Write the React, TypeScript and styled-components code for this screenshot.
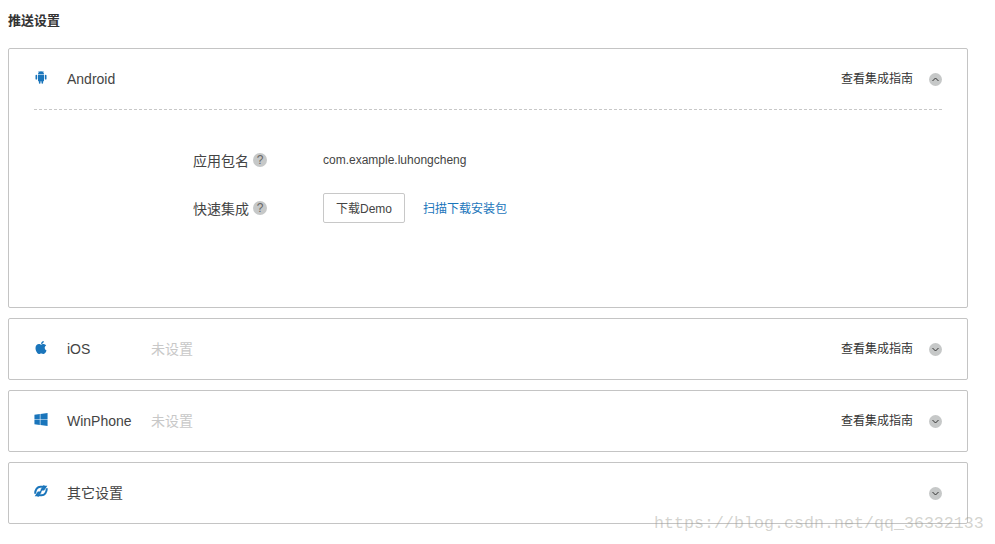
import React from "react";
import styled, { createGlobalStyle } from "styled-components";
import { FaApple, FaWindows } from "react-icons/fa";

const GlobalStyle = createGlobalStyle`
    html, body {
        margin: 0;
        padding: 0;
        background: #fff;
    }
    body {
        font-family: "Liberation Sans", "Noto Sans CJK SC", sans-serif;
        color: #333;
    }
`;

const Page = styled.div`
    position: relative;
    width: 995px;
    height: 544px;
    overflow: hidden;
    padding: 12px 27px 0 8px;
    box-sizing: border-box;
`;

const Title = styled.h2`
    margin: 0 0 18px;
    font-size: 13px;
    line-height: 18px;
    font-weight: 700;
    color: #333;
`;

const Card = styled.section<{ $open?: boolean }>`
    border: 1px solid #c4c4c4;
    border-radius: 2px;
    margin-bottom: 10px;
    box-sizing: border-box;
    height: ${(p) => (p.$open ? "260px" : "62px")};
`;

const Header = styled.div`
    display: flex;
    align-items: center;
    height: 60px;
    padding: 0 25px;
`;

const PlatformIcon = styled.span`
    display: flex;
    justify-content: center;
    width: 14px;
    margin-right: 19px;
    margin-bottom: 4px;
    font-size: 15px;
    color: #1a75bb;
`;

const Name = styled.span<{ $cjk?: boolean }>`
    width: 84px;
    font-size: 14px;
    color: #444;
    margin-bottom: ${(p) => (p.$cjk ? "2px" : "0")};
`;

const Status = styled.span`
    font-size: 14px;
    margin-bottom: 2px;
    color: #c8c8c8;
`;

const Guide = styled.span`
    margin-left: auto;
    margin-bottom: 3px;
    font-size: 12px;
    color: #333;
`;

const Toggle = styled.span`
    display: flex;
    align-items: center;
    justify-content: center;
    width: 13px;
    height: 13px;
    margin-left: 16px;
    margin-top: 1px;
    border-radius: 50%;
    background: #c6c8c8;
`;

const ToggleOnly = styled(Toggle)`
    margin-left: auto;
`;

const Divider = styled.div`
    height: 0;
    margin: 0 25px;
    border-top: 1px dashed #c8c8c8;
`;

const Body = styled.div`
    display: flex;
    flex-direction: column;
    padding: 26px 0 0 184px;
`;

const Row = styled.div`
    display: flex;
    align-items: center;
    height: 48px;
`;

const Label = styled.span`
    display: flex;
    align-items: center;
    width: 130px;
    font-size: 14px;
    color: #444;
`;

const Help = styled.span`
    display: inline-flex;
    align-items: center;
    justify-content: center;
    width: 14px;
    height: 14px;
    margin-left: 4px;
    border-radius: 50%;
    background: #c6c8c8;
    color: #666;
    font-size: 12px;
`;

const Value = styled.span`
    font-size: 12px;
    color: #444;
`;

const DemoButton = styled.button`
    width: 82px;
    height: 30px;
    padding: 0 0 2px;
    border: 1px solid #c8c8c8;
    border-radius: 2px;
    background: #fff;
    color: #444;
    font: inherit;
    font-size: 12px;
`;

const ScanLink = styled.a`
    margin-left: 18px;
    margin-bottom: 1px;
    font-size: 12px;
    color: #1a75bb;
    text-decoration: none;
`;

const Watermark = styled.div`
    position: absolute;
    left: 654px;
    top: 513px;
    font-family: "Liberation Mono", monospace;
    font-size: 16.67px;
    line-height: 22px;
    color: rgba(150, 150, 140, 0.42);
    white-space: nowrap;
`;

const Chevron: React.FC<{ up?: boolean }> = ({ up }) => (
    <svg width="7" height="5" viewBox="0 0 7 5" fill="none" stroke="#333" strokeWidth="1">
        <path d={up ? "M0.5 4L3.5 1L6.5 4" : "M0.5 1L3.5 4L6.5 1"} />
    </svg>
);

const AndroidIcon: React.FC = () => (
    <svg width="12" height="14" viewBox="0 0 12 14" fill="currentColor">
        <path d="M3 4.2C3 2.4 4.3 1.2 6 1.2S9 2.4 9 4.2Z" />
        <path d="M3.6 1L4.4 2.2M8.4 1L7.6 2.2" stroke="currentColor" strokeWidth="0.6" />
        <path d="M3 4.8H9V10.4C9 10.9 8.7 11.2 8.2 11.2H3.8C3.3 11.2 3 10.9 3 10.4Z" />
        <rect x="0.5" y="4.8" width="1.7" height="4.8" rx="0.85" />
        <rect x="9.8" y="4.8" width="1.7" height="4.8" rx="0.85" />
        <rect x="3.9" y="10.5" width="1.6" height="3.2" rx="0.8" />
        <rect x="6.5" y="10.5" width="1.6" height="3.2" rx="0.8" />
    </svg>
);

const LinkIcon: React.FC = () => (
    <svg width="14" height="12" viewBox="0 0 14 12" fill="none" stroke="currentColor" strokeWidth="2">
        <path d="M1.2 8.8C1.2 4.6 3.4 1.8 6.4 1.8H11.4L9.6 4.4H6.8" />
        <path d="M12.8 3.2C12.8 7.4 10.6 10.2 7.6 10.2H2.6L4.4 7.6H7.2" />
        <path d="M3.8 11.6L10.2 0.4" strokeWidth="1.2" />
    </svg>
);

const App: React.FC = () => {
    return (
        <Page>
            <GlobalStyle />
            <Title>推送设置</Title>
            <Card $open>
                <Header>
                    <PlatformIcon><AndroidIcon /></PlatformIcon>
                    <Name>Android</Name>
                    <Guide>查看集成指南</Guide>
                    <Toggle><Chevron up /></Toggle>
                </Header>
                <Divider />
                <Body>
                    <Row>
                        <Label>应用包名<Help>?</Help></Label>
                        <Value>com.example.luhongcheng</Value>
                    </Row>
                    <Row>
                        <Label>快速集成<Help>?</Help></Label>
                        <DemoButton>下载Demo</DemoButton>
                        <ScanLink href="#">扫描下载安装包</ScanLink>
                    </Row>
                </Body>
            </Card>
            <Card>
                <Header>
                    <PlatformIcon><FaApple /></PlatformIcon>
                    <Name>iOS</Name>
                    <Status>未设置</Status>
                    <Guide>查看集成指南</Guide>
                    <Toggle><Chevron /></Toggle>
                </Header>
            </Card>
            <Card>
                <Header>
                    <PlatformIcon><FaWindows /></PlatformIcon>
                    <Name>WinPhone</Name>
                    <Status>未设置</Status>
                    <Guide>查看集成指南</Guide>
                    <Toggle><Chevron /></Toggle>
                </Header>
            </Card>
            <Card>
                <Header>
                    <PlatformIcon><LinkIcon /></PlatformIcon>
                    <Name $cjk>其它设置</Name>
                    <ToggleOnly><Chevron /></ToggleOnly>
                </Header>
            </Card>
            <Watermark>https://blog.csdn.net/qq_36332133</Watermark>
        </Page>
    );
};

export default App;
